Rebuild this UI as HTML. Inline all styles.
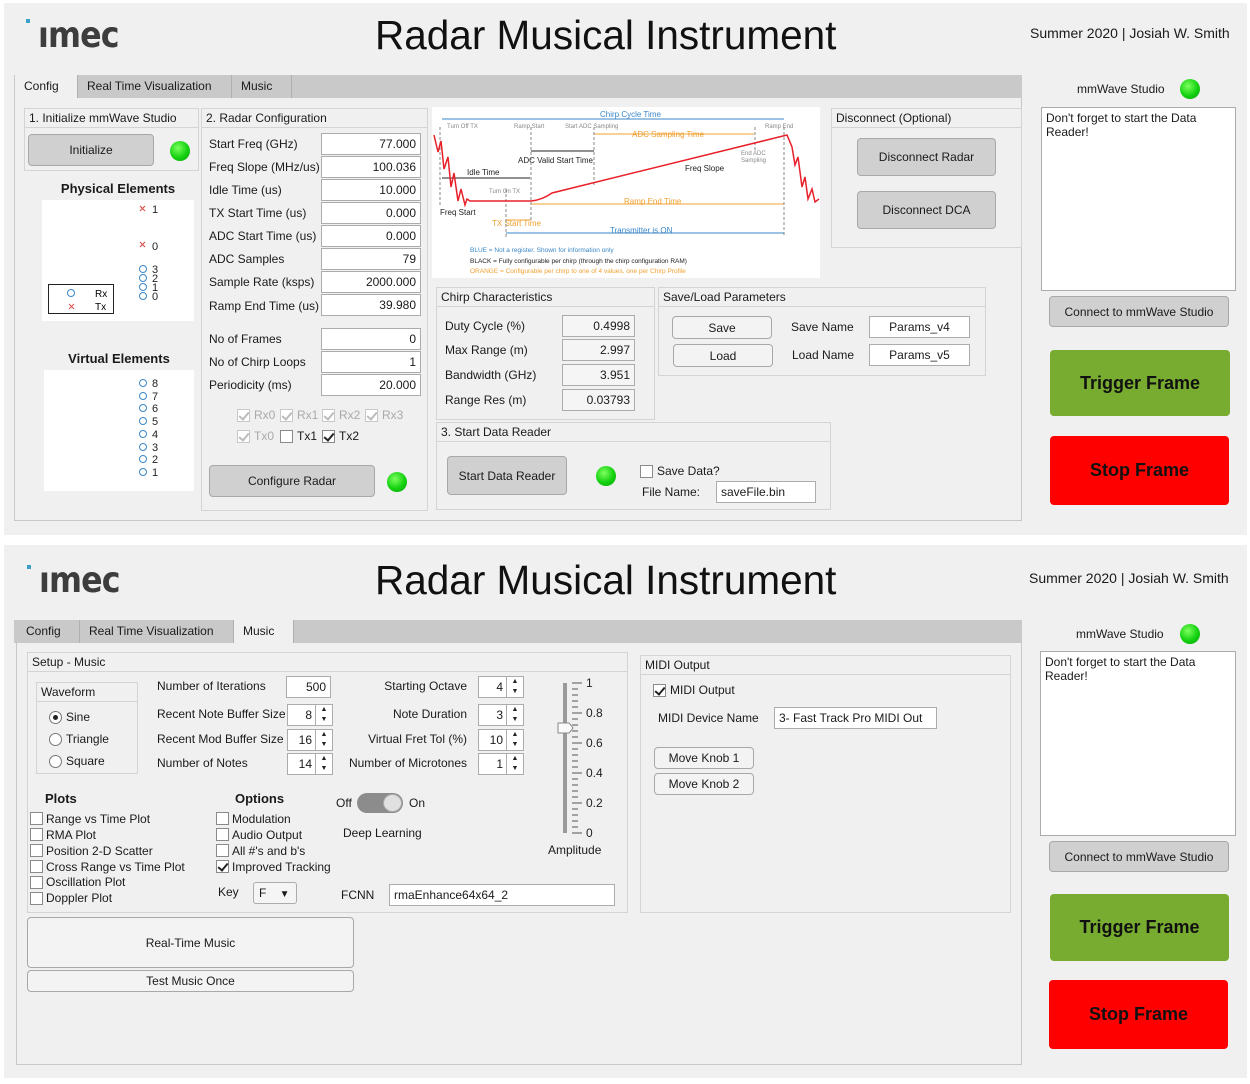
<!DOCTYPE html>
<html><head><meta charset="utf-8"><style>
*{box-sizing:border-box;margin:0;padding:0}
body{width:1250px;height:1084px;background:#fff;position:relative;overflow:hidden;font-family:"Liberation Sans",Arial,sans-serif;font-size:12px;color:#1a1a1a}
.a{position:absolute}
.bg{background:#f0f0f0}
.t{position:absolute;line-height:16px;white-space:nowrap}
.pn{position:absolute;border:1px solid #d4d4d4;background:#f0f0f0}
.pn>.h{height:19px;border-bottom:1px solid #d4d4d4;padding:1px 4px;line-height:16px;white-space:nowrap}
.in{position:absolute;background:#fff;border:1px solid #acacac;height:22px;line-height:20px;padding:0 4px;text-align:right;white-space:nowrap}
.ro{background:#f5f5f5}
.btn{position:absolute;background:#d0d0d0;border:1px solid #a8a8a8;border-radius:4px;text-align:center;display:flex;align-items:center;justify-content:center;white-space:nowrap}
.btn2{position:absolute;background:#f3f3f3;border:1px solid #a8a8a8;border-radius:4px;text-align:center;display:flex;align-items:center;justify-content:center;white-space:nowrap}
.led{position:absolute;width:20px;height:20px;border-radius:50%;background:radial-gradient(circle at 40% 35%,#7dff5e,#13d10f 55%,#0ba00a);}
.cb{position:absolute;width:13px;height:13px;background:#fff;border:1px solid #8a8a8a}
.cb.k::after{content:"";position:absolute;left:3px;top:0px;width:4px;height:8px;border:solid #222;border-width:0 2px 2px 0;transform:rotate(40deg)}
.cb.g{border-color:#c8c8c8}.cb.g::after{border-color:#bbb}
.rd{position:absolute;width:13px;height:13px;border-radius:50%;background:#fff;border:1px solid #777}
.logo{position:absolute;font-size:36px;font-weight:bold;color:#3d3d3d;letter-spacing:-1px;font-family:"DejaVu Sans","Liberation Sans",sans-serif;transform:scaleX(0.88);transform-origin:left top}
.dot{position:absolute;width:4px;height:4px;background:#3aa0c8}
.title{position:absolute;font-size:40.5px;left:375px;white-space:nowrap;color:#111}
.tabbar{position:absolute;left:14px;width:1008px;height:23px;background:#c9c9c9}
.tab{position:absolute;height:23px;line-height:23px;padding-left:9px;border-right:1px solid #b0b0b0;white-space:nowrap}
.big{position:absolute;border-radius:4px;font-size:18px;font-weight:bold;display:flex;align-items:center;justify-content:center;color:#111}
.sp{position:absolute;background:#fff;border:1px solid #acacac;height:22px;line-height:20px;padding-right:20px;text-align:right}
.sp::after{content:"▲\A▼";white-space:pre;position:absolute;right:0;top:0;width:16px;height:20px;border-left:1px solid #acacac;font-size:7px;line-height:10px;text-align:center;color:#222}
</style></head><body>

<!-- ================= TOP PANEL ================= -->
<div class="a bg" style="left:4px;top:3px;width:1243px;height:532px"></div>
<div class="dot" style="left:26px;top:19px"></div>
<div class="logo" style="left:38px;top:15px">ımec</div>
<div class="title" style="top:12px">Radar Musical Instrument</div>
<div class="t" style="left:1030px;top:25px;font-size:14px">Summer 2020 | Josiah W. Smith</div>

<div class="tabbar" style="top:75px"></div>
<div class="tab" style="left:15px;top:75px;width:63px;background:#f0f0f0">Config</div>
<div class="tab" style="left:78px;top:75px;width:154px">Real Time Visualization</div>
<div class="tab" style="left:232px;top:75px;width:60px">Music</div>
<div class="a" style="left:14px;top:98px;width:1008px;height:423px;border:1px solid #c8c8c8;border-top:none"></div>

<div class="pn" style="left:24px;top:108px;width:175px;height:63px"><div class="h">1. Initialize mmWave Studio</div></div>
<div class="btn" style="left:28px;top:134px;width:126px;height:32px">Initialize</div>
<div class="led" style="left:170px;top:141px"></div>

<div class="t" style="left:42px;top:181px;width:152px;text-align:center;font-weight:bold;font-size:13px">Physical Elements</div>
<div class="a" style="left:42px;top:200px;width:152px;height:121px;background:#fff"></div>
<svg class="a" style="left:42px;top:200px" width="152" height="121">
<g font-family="Liberation Sans" font-size="11" fill="#222">
<text x="110" y="13">1</text><text x="110" y="50">0</text>
<text x="110" y="73">3</text><text x="110" y="82">2</text><text x="110" y="91">1</text><text x="110" y="100">0</text></g>
<g stroke="#d9534f" stroke-width="1.2"><path d="M98 6l5 5M103 6l-5 5M98 42l5 5M103 42l-5 5"/></g>
<g fill="none" stroke="#3a87c8"><circle cx="101" cy="69" r="3.5"/><circle cx="101" cy="78" r="3.5"/><circle cx="101" cy="87" r="3.5"/><circle cx="101" cy="96" r="3.5"/></g>
<rect x="6.5" y="84.5" width="65" height="29" fill="#fff" stroke="#222"/>
<circle cx="29" cy="93" r="3.5" fill="none" stroke="#3a87c8"/>
<path d="M27 104l5 5M32 104l-5 5" stroke="#d9534f"/>
<text x="53" y="97" font-size="10" font-family="Liberation Sans">Rx</text><text x="53" y="110" font-size="10" font-family="Liberation Sans">Tx</text>
</svg>

<div class="t" style="left:44px;top:351px;width:150px;text-align:center;font-weight:bold;font-size:13px">Virtual Elements</div>
<div class="a" style="left:44px;top:370px;width:150px;height:121px;background:#fff"></div>
<svg class="a" style="left:44px;top:370px" width="150" height="121">
<g fill="none" stroke="#3a87c8"><circle cx="99" cy="13" r="3.5"/><circle cx="99" cy="26" r="3.5"/><circle cx="99" cy="38" r="3.5"/><circle cx="99" cy="51" r="3.5"/><circle cx="99" cy="64" r="3.5"/><circle cx="99" cy="77" r="3.5"/><circle cx="99" cy="89" r="3.5"/><circle cx="99" cy="102" r="3.5"/></g>
<g font-family="Liberation Sans" font-size="11" fill="#222"><text x="108" y="17">8</text><text x="108" y="30">7</text><text x="108" y="42">6</text><text x="108" y="55">5</text><text x="108" y="68">4</text><text x="108" y="81">3</text><text x="108" y="93">2</text><text x="108" y="106">1</text></g>
</svg>

<div class="pn" style="left:201px;top:108px;width:227px;height:403px"><div class="h">2. Radar Configuration</div></div>
<div class="t" style="left:209px;top:136px">Start Freq (GHz)</div><div class="in" style="left:321px;top:133px;width:100px">77.000</div>
<div class="t" style="left:209px;top:159px">Freq Slope (MHz/us)</div><div class="in" style="left:321px;top:156px;width:100px">100.036</div>
<div class="t" style="left:209px;top:182px">Idle Time (us)</div><div class="in" style="left:321px;top:179px;width:100px">10.000</div>
<div class="t" style="left:209px;top:205px">TX Start Time (us)</div><div class="in" style="left:321px;top:202px;width:100px">0.000</div>
<div class="t" style="left:209px;top:228px">ADC Start Time (us)</div><div class="in" style="left:321px;top:225px;width:100px">0.000</div>
<div class="t" style="left:209px;top:251px">ADC Samples</div><div class="in" style="left:321px;top:248px;width:100px">79</div>
<div class="t" style="left:209px;top:274px">Sample Rate (ksps)</div><div class="in" style="left:321px;top:271px;width:100px">2000.000</div>
<div class="t" style="left:209px;top:298px">Ramp End Time (us)</div><div class="in" style="left:321px;top:294px;width:100px">39.980</div>
<div class="t" style="left:209px;top:331px">No of Frames</div><div class="in" style="left:321px;top:328px;width:100px">0</div>
<div class="t" style="left:209px;top:354px">No of Chirp Loops</div><div class="in" style="left:321px;top:351px;width:100px">1</div>
<div class="t" style="left:209px;top:377px">Periodicity (ms)</div><div class="in" style="left:321px;top:374px;width:100px">20.000</div>
<div class="cb k g" style="left:237px;top:409px"></div><div class="t" style="left:254px;top:407px;color:#aaa">Rx0</div>
<div class="cb k g" style="left:280px;top:409px"></div><div class="t" style="left:297px;top:407px;color:#aaa">Rx1</div>
<div class="cb k g" style="left:322px;top:409px"></div><div class="t" style="left:339px;top:407px;color:#aaa">Rx2</div>
<div class="cb k g" style="left:365px;top:409px"></div><div class="t" style="left:382px;top:407px;color:#aaa">Rx3</div>
<div class="cb k g" style="left:237px;top:430px"></div><div class="t" style="left:254px;top:428px;color:#aaa">Tx0</div>
<div class="cb" style="left:280px;top:430px"></div><div class="t" style="left:297px;top:428px">Tx1</div>
<div class="cb k" style="left:322px;top:430px"></div><div class="t" style="left:339px;top:428px">Tx2</div>
<div class="btn" style="left:209px;top:465px;width:166px;height:32px">Configure Radar</div>
<div class="led" style="left:387px;top:472px"></div>

<!-- chirp diagram -->
<svg class="a" style="left:432px;top:107px" width="388" height="171">
<rect width="388" height="171" fill="#fff"/>
<g font-family="Liberation Sans" font-size="6" fill="#888">
<text x="15" y="21">Turn Off TX</text><text x="82" y="21">Ramp Start</text><text x="133" y="21">Start ADC Sampling</text><text x="333" y="21">Ramp End</text><text x="309" y="48">End ADC</text><text x="309" y="55">Sampling</text><text x="57" y="86">Turn On TX</text></g>
<g font-family="Liberation Sans" font-size="8">
<text x="168" y="10" fill="#3a87c8">Chirp Cycle Time</text>
<text x="200" y="30" fill="#f0a030">ADC Sampling Time</text>
<text x="86" y="56" fill="#222">ADC Valid Start Time</text>
<text x="35" y="68" fill="#222">Idle Time</text>
<text x="253" y="64" fill="#222">Freq Slope</text>
<text x="192" y="97" fill="#f0a030">Ramp End Time</text>
<text x="8" y="108" fill="#222">Freq Start</text>
<text x="60" y="119" fill="#f0a030">TX Start Time</text>
<text x="178" y="126" fill="#3a87c8">Transmitter is ON</text>
<text x="38" y="145" fill="#3a87c8" font-size="6.5">BLUE = Not a register. Shown for information only</text>
<text x="38" y="156" fill="#222" font-size="6.5">BLACK = Fully configurable per chirp (through the chirp configuration RAM)</text>
<text x="38" y="166" fill="#f0a030" font-size="6.5">ORANGE = Configurable per chirp to one of 4 values, one per Chirp Profile</text></g>
<g stroke-width="1"><path d="M10 12H352" stroke="#3a87c8"/><path d="M74 126H352" stroke="#3a87c8"/>
<path d="M162 27H322" stroke="#f0a030"/><path d="M99 97H352" stroke="#f0a030"/><path d="M74 113H99" stroke="#f0a030"/>
<path d="M99 44H162M10 71H98" stroke="#222"/></g>
<g stroke="#888" stroke-dasharray="3 2"><path d="M99 20V113M162 20V80M74 82V130M352 20V130M323 20V45M8 20V100"/></g>
<path d="M2 28 L6 45 L9 34 L12 62 L16 50 L19 80 L22 66 L26 94 L29 82 L33 98 L35 92 L38 94 L99 94 Q110 93 120 86 L355 28 L360 40 L363 58 L366 50 L370 80 L373 70 L376 92 L380 82 L383 95 L387 92" fill="none" stroke="#e8202a" stroke-width="1.5"/>
</svg>

<div class="pn" style="left:831px;top:108px;width:191px;height:140px"><div class="h">Disconnect (Optional)</div></div>
<div class="btn" style="left:857px;top:138px;width:139px;height:38px">Disconnect Radar</div>
<div class="btn" style="left:857px;top:191px;width:139px;height:38px">Disconnect DCA</div>

<div class="pn" style="left:436px;top:287px;width:219px;height:133px"><div class="h">Chirp Characteristics</div></div>
<div class="t" style="left:445px;top:318px">Duty Cycle (%)</div><div class="in ro" style="left:562px;top:315px;width:73px">0.4998</div>
<div class="t" style="left:445px;top:342px">Max Range (m)</div><div class="in ro" style="left:562px;top:339px;width:73px">2.997</div>
<div class="t" style="left:445px;top:367px">Bandwidth (GHz)</div><div class="in ro" style="left:562px;top:364px;width:73px">3.951</div>
<div class="t" style="left:445px;top:392px">Range Res (m)</div><div class="in ro" style="left:562px;top:389px;width:73px">0.03793</div>

<div class="pn" style="left:658px;top:287px;width:328px;height:89px"><div class="h">Save/Load Parameters</div></div>
<div class="btn2" style="left:672px;top:316px;width:100px;height:23px">Save</div>
<div class="btn2" style="left:673px;top:344px;width:100px;height:23px">Load</div>
<div class="t" style="left:791px;top:319px">Save Name</div><div class="in" style="left:869px;top:316px;width:101px;text-align:center">Params_v4</div>
<div class="t" style="left:792px;top:347px">Load Name</div><div class="in" style="left:869px;top:344px;width:101px;text-align:center">Params_v5</div>

<div class="pn" style="left:436px;top:422px;width:395px;height:88px"><div class="h">3. Start Data Reader</div></div>
<div class="btn" style="left:447px;top:456px;width:120px;height:39px">Start Data Reader</div>
<div class="led" style="left:596px;top:466px"></div>
<div class="cb" style="left:640px;top:465px"></div><div class="t" style="left:657px;top:463px">Save Data?</div>
<div class="t" style="left:642px;top:484px">File Name:</div><div class="in" style="left:716px;top:481px;width:100px;text-align:left">saveFile.bin</div>

<div class="t" style="left:1077px;top:81px">mmWave Studio</div><div class="led" style="left:1180px;top:79px"></div>
<div class="a" style="left:1041px;top:107px;width:195px;height:184px;background:#fff;border:1px solid #acacac;padding:3px 4px;line-height:14px">Don't forget to start the Data Reader!</div>
<div class="btn" style="left:1049px;top:296px;width:180px;height:31px">Connect to mmWave Studio</div>
<div class="big" style="left:1050px;top:350px;width:180px;height:66px;background:#77ac30">Trigger Frame</div>
<div class="big" style="left:1050px;top:436px;width:179px;height:69px;background:#ff0000">Stop Frame</div>

<!-- ================= BOTTOM PANEL ================= -->
<div class="a bg" style="left:4px;top:545px;width:1243px;height:533px"></div>
<div class="dot" style="left:27px;top:565px"></div>
<div class="logo" style="left:39px;top:560px">ımec</div>
<div class="title" style="top:557px">Radar Musical Instrument</div>
<div class="t" style="left:1029px;top:570px;font-size:14px">Summer 2020 | Josiah W. Smith</div>

<div class="tabbar" style="top:620px"></div>
<div class="tab" style="left:17px;top:620px;width:63px">Config</div>
<div class="tab" style="left:80px;top:620px;width:154px">Real Time Visualization</div>
<div class="tab" style="left:234px;top:620px;width:60px;background:#f0f0f0">Music</div>
<div class="a" style="left:16px;top:643px;width:1006px;height:422px;border:1px solid #c8c8c8;border-top:none"></div>

<div class="pn" style="left:27px;top:652px;width:601px;height:261px"><div class="h">Setup - Music</div></div>
<div class="pn" style="left:36px;top:682px;width:102px;height:92px"><div class="h">Waveform</div></div>
<div class="rd" style="left:49px;top:711px"></div><div class="a" style="left:53px;top:715px;width:5px;height:5px;border-radius:50%;background:#222"></div><div class="t" style="left:66px;top:709px">Sine</div>
<div class="rd" style="left:49px;top:733px"></div><div class="t" style="left:66px;top:731px">Triangle</div>
<div class="rd" style="left:49px;top:755px"></div><div class="t" style="left:66px;top:753px">Square</div>

<div class="t" style="left:157px;top:678px">Number of Iterations</div><div class="in" style="left:286px;top:676px;width:45px">500</div>
<div class="t" style="left:157px;top:706px">Recent Note Buffer Size</div><div class="sp" style="left:287px;top:704px;width:46px">8</div>
<div class="t" style="left:157px;top:731px">Recent Mod Buffer Size</div><div class="sp" style="left:287px;top:729px;width:46px">16</div>
<div class="t" style="left:157px;top:755px">Number of Notes</div><div class="sp" style="left:287px;top:753px;width:46px">14</div>
<div class="t" style="left:330px;top:678px;width:137px;text-align:right">Starting Octave</div><div class="sp" style="left:478px;top:676px;width:46px">4</div>
<div class="t" style="left:330px;top:706px;width:137px;text-align:right">Note Duration</div><div class="sp" style="left:478px;top:704px;width:46px">3</div>
<div class="t" style="left:330px;top:731px;width:137px;text-align:right">Virtual Fret Tol (%)</div><div class="sp" style="left:478px;top:729px;width:46px">10</div>
<div class="t" style="left:330px;top:755px;width:137px;text-align:right">Number of Microtones</div><div class="sp" style="left:478px;top:753px;width:46px">1</div>

<svg class="a" style="left:545px;top:676px" width="70" height="170">
<rect x="18" y="7" width="4" height="150" fill="#9a9a9a"/>
<g stroke="#555"><path d="M27 7h10M27 37h10M27 67h10M27 97h10M27 127h10M27 157h10"/>
<path d="M27 13h6M27 19h6M27 25h6M27 31h6M27 43h6M27 49h6M27 55h6M27 61h6M27 73h6M27 79h6M27 85h6M27 91h6M27 103h6M27 109h6M27 115h6M27 121h6M27 133h6M27 139h6M27 145h6M27 151h6"/></g>
<path d="M13 47h11l4 5-4 5H13z" fill="#fafafa" stroke="#888"/>
<g font-family="Liberation Sans" font-size="12" fill="#222"><text x="41" y="11">1</text><text x="41" y="41">0.8</text><text x="41" y="71">0.6</text><text x="41" y="101">0.4</text><text x="41" y="131">0.2</text><text x="41" y="161">0</text></g>
</svg>
<div class="t" style="left:548px;top:842px">Amplitude</div>

<div class="t" style="left:45px;top:791px;font-weight:bold;font-size:13px">Plots</div>
<div class="cb" style="left:30px;top:812px"></div><div class="t" style="left:46px;top:811px">Range vs Time Plot</div>
<div class="cb" style="left:30px;top:828px"></div><div class="t" style="left:46px;top:827px">RMA Plot</div>
<div class="cb" style="left:30px;top:844px"></div><div class="t" style="left:46px;top:843px">Position 2-D Scatter</div>
<div class="cb" style="left:30px;top:860px"></div><div class="t" style="left:46px;top:859px">Cross Range vs Time Plot</div>
<div class="cb" style="left:30px;top:876px"></div><div class="t" style="left:46px;top:874px">Oscillation Plot</div>
<div class="cb" style="left:30px;top:892px"></div><div class="t" style="left:46px;top:890px">Doppler Plot</div>

<div class="t" style="left:235px;top:791px;font-weight:bold;font-size:13px">Options</div>
<div class="cb" style="left:216px;top:812px"></div><div class="t" style="left:232px;top:811px">Modulation</div>
<div class="cb" style="left:216px;top:828px"></div><div class="t" style="left:232px;top:827px">Audio Output</div>
<div class="cb" style="left:216px;top:844px"></div><div class="t" style="left:232px;top:843px">All #'s and b's</div>
<div class="cb k" style="left:216px;top:860px"></div><div class="t" style="left:232px;top:859px">Improved Tracking</div>

<div class="t" style="left:336px;top:795px">Off</div>
<div class="a" style="left:357px;top:793px;width:46px;height:20px;border-radius:10px;background:#8c8c8c"></div>
<div class="a" style="left:383px;top:794px;width:19px;height:18px;border-radius:50%;background:#e0e0e0;border:1px solid #aaa"></div>
<div class="t" style="left:409px;top:795px">On</div>
<div class="t" style="left:343px;top:825px">Deep Learning</div>

<div class="t" style="left:218px;top:884px">Key</div>
<div class="a" style="left:253px;top:882px;width:44px;height:22px;background:#f5f5f5;border:1px solid #acacac;border-radius:3px;line-height:20px;padding-left:5px">F <span style="margin-left:10px;font-size:10px">▼</span></div>
<div class="t" style="left:341px;top:887px">FCNN</div>
<div class="in" style="left:389px;top:884px;width:226px;text-align:left">rmaEnhance64x64_2</div>

<div class="btn2" style="left:27px;top:917px;width:327px;height:51px">Real-Time Music</div>
<div class="btn2" style="left:27px;top:970px;width:327px;height:22px">Test Music Once</div>

<div class="pn" style="left:640px;top:655px;width:371px;height:258px"><div class="h">MIDI Output</div></div>
<div class="cb k" style="left:653px;top:684px"></div><div class="t" style="left:670px;top:682px">MIDI Output</div>
<div class="t" style="left:658px;top:710px">MIDI Device Name</div>
<div class="in" style="left:774px;top:707px;width:163px;text-align:left">3- Fast Track Pro MIDI Out</div>
<div class="btn2" style="left:654px;top:747px;width:100px;height:22px">Move Knob 1</div>
<div class="btn2" style="left:654px;top:773px;width:100px;height:22px">Move Knob 2</div>

<div class="t" style="left:1076px;top:626px">mmWave Studio</div><div class="led" style="left:1180px;top:624px"></div>
<div class="a" style="left:1040px;top:651px;width:196px;height:185px;background:#fff;border:1px solid #acacac;padding:3px 4px;line-height:14px">Don't forget to start the Data Reader!</div>
<div class="btn" style="left:1049px;top:841px;width:180px;height:31px">Connect to mmWave Studio</div>
<div class="big" style="left:1050px;top:894px;width:179px;height:67px;background:#77ac30">Trigger Frame</div>
<div class="big" style="left:1049px;top:980px;width:179px;height:69px;background:#ff0000">Stop Frame</div>
</body></html>
